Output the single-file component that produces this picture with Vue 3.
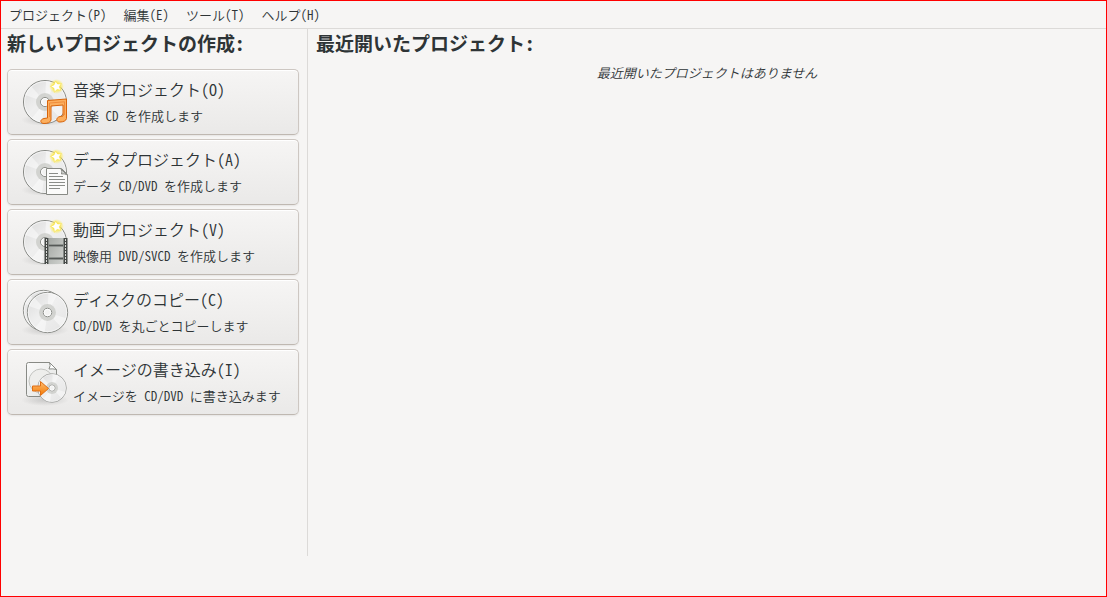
<script setup>
const menus = ['プロジェクト(P)', '編集(E)', 'ツール(T)', 'ヘルプ(H)']

const projects = [
  { kind: 'music', title: '音楽プロジェクト(O)', note: '音楽 CD を作成します' },
  { kind: 'data', title: 'データプロジェクト(A)', note: 'データ CD/DVD を作成します' },
  { kind: 'video', title: '動画プロジェクト(V)', note: '映像用 DVD/SVCD を作成します' },
  { kind: 'copy', title: 'ディスクのコピー(C)', note: 'CD/DVD を丸ごとコピーします' },
  { kind: 'image', title: 'イメージの書き込み(I)', note: 'イメージを CD/DVD に書き込みます' },
]
</script>

<template>
  <div class="window">
    <svg class="defs" aria-hidden="true">
      <defs>
        <linearGradient id="disc-fill" x1="0" y1="0" x2="1" y2="1">
          <stop offset="0" stop-color="#dadada" />
          <stop offset="0.45" stop-color="#efefef" />
          <stop offset="1" stop-color="#e4e4e4" />
        </linearGradient>
        <linearGradient id="page-fill" x1="0" y1="0" x2="1" y2="1">
          <stop offset="0" stop-color="#fafafa" />
          <stop offset="1" stop-color="#e2e3e1" />
        </linearGradient>
        <linearGradient id="film" x1="0" y1="0" x2="1" y2="1">
          <stop offset="0" stop-color="#a4a8a4" />
          <stop offset="1" stop-color="#d0d2cf" />
        </linearGradient>
        <linearGradient id="orange" x1="0" y1="0" x2="0" y2="1">
          <stop offset="0" stop-color="#fcbd74" />
          <stop offset="1" stop-color="#f57900" />
        </linearGradient>
        <radialGradient id="glow">
          <stop offset="0.4" stop-color="#fce94f" />
          <stop offset="1" stop-color="#fce94f" stop-opacity="0" />
        </radialGradient>
        <radialGradient id="shade">
          <stop offset="0" stop-color="#000" stop-opacity="0.15" />
          <stop offset="1" stop-color="#000" stop-opacity="0" />
        </radialGradient>
        <symbol id="disc" viewBox="0 0 48 48">
          <circle cx="24" cy="24" r="21.5" fill="url(#disc-fill)" stroke="#858783" />
          <circle cx="24" cy="24" r="20.5" fill="none" stroke="#fff" stroke-opacity="0.6" />
          <path d="M24 24 4 17A21 21 0 0 1 10 8ZM24 24 25 3A21 21 0 0 1 34 6ZM24 24 44 30A21 21 0 0 1 38 39ZM24 24 21 45A21 21 0 0 1 11 40Z" fill="#fff" fill-opacity="0.45" />
          <circle cx="24" cy="24" r="9" fill="#c8c9c6" fill-opacity="0.75" />
          <circle cx="24" cy="24" r="4.5" fill="#f3f3f2" stroke="#888a85" />
          <circle cx="24" cy="24" r="3.5" fill="none" stroke="#fff" />
        </symbol>
        <symbol id="spark" viewBox="0 0 16 16">
          <circle cx="8" cy="8" r="8" fill="url(#glow)" />
          <path d="m7 2 2.2 3.3 4-.4L11 8.3l1.7 3.7-4-.8-3 2.8-.4-4.1-3.600-2 3.700-1.700Z" fill="#fff" stroke="#f9e23c" stroke-width="0.7" />
        </symbol>
      </defs>
    </svg>

    <nav class="menubar">
      <button v-for="item in menus" :key="item" type="button">{{ item }}</button>
    </nav>

    <main class="content">
      <section class="create">
        <h2>新しいプロジェクトの作成:</h2>
        <div class="projects">
          <button v-for="p in projects" :key="p.kind" type="button" class="project">
            <svg class="icon" viewBox="0 0 48 48" aria-hidden="true">
              <ellipse cx="24" cy="42" rx="24" ry="6" fill="url(#shade)" />
              <template v-if="p.kind === 'copy'">
                <use href="#disc" x="0" y="0" width="45" height="45" />
                <use href="#disc" x="4" y="2" width="45" height="45" />
              </template>
              <template v-else-if="p.kind === 'image'">
                <path d="M7.500 4.500h21l7 7v25a2 2 0 0 1-2 2h-26a2 2 0 0 1-2-2v-30a2 2 0 0 1 2-2Z" fill="url(#page-fill)" stroke="#888a85" stroke-linejoin="round" />
                <circle cx="20" cy="23" r="12" fill="#eeeeec" stroke="#c3c4c1" />
                <path d="M28.500 4.500q1.500 3-.5 6.500 4-.5 7.500.5Z" fill="#fff" stroke="#888a85" stroke-linejoin="round" />
                <use href="#disc" x="15" y="14" width="32" height="32" />
                <path d="M11.500 28h8v-4.500l8 7-8 7v-4.500h-8Z" fill="url(#orange)" stroke="#e06f14" stroke-linejoin="round" />
              </template>
              <template v-else>
                <use href="#disc" width="48" height="48" />
                <use href="#spark" x="28" y="1" width="15" height="15" />
              </template>
              <template v-if="p.kind === 'music'">
                <path d="M26.500 22.500 45.500 21v19.500c-.5 2.500-3.500 3.500-6.500 3.500-4 0-4.500-4.500 0-5.500l3-.5V27l-12 1v14c-.5 2.500-3.500 3.500-7 3.500-4 0-4.500-4 0-5l3.500-.5Z" fill="#fcaf5e" stroke="#d9640a" stroke-linejoin="round" />
                <path d="M28.500 39V25l15-1.200V37" fill="none" stroke="#f08c3c" />
              </template>
              <template v-if="p.kind === 'data'">
                <path d="M25.500 20.500h15l6 6v20h-21Z" fill="#fbfbfa" stroke="#888a85" />
                <path d="M39.500 20.500c2 2 1 4 1 5.500 2-.5 5 0 6 1.500Z" fill="#d3d4d1" stroke="#888a85" />
                <path d="M28 25.500h9M28 28.500h14M28 31.500h16M28 34.500h16M28 37.500h16M28 40.500h11" stroke="#8b8d89" />
              </template>
              <template v-if="p.kind === 'video'">
                <path d="M24 20h22v26H24Z" fill="#c9ccc9" />
                <path d="M28 20h14v6H28ZM28 29h14v10H28ZM28 42h14v4H28Z" fill="url(#film)" />
                <path d="M28 27.500h14M28 40.500h14" stroke="#555957" stroke-width="2" />
                <path d="M25.500 20v26M44.500 20v26" stroke="#454946" stroke-width="4" />
                <path d="M25.500 21v25M44.500 21v25" stroke="#d9dad8" stroke-dasharray="2 1" />
              </template>
            </svg>
            <span class="labels">
              <span class="title">{{ p.title }}</span>
              <span class="note">{{ p.note }}</span>
            </span>
          </button>
        </div>
      </section>

      <section class="recent">
        <h2>最近開いたプロジェクト:</h2>
        <p>最近開いたプロジェクトはありません</p>
      </section>
    </main>
  </div>
</template>

<style>
body {
  background: #f6f5f4;
}
</style>

<style scoped>
.window {
  box-sizing: border-box;
  min-height: 100vh;
  padding-bottom: 40px;
  display: flex;
  flex-direction: column;
  border: 1px solid #f00;
  background: #f6f5f4;
  color: #2e3436;
  font-family: "Noto Sans CJK JP", sans-serif;
  font-feature-settings: "hwid";
  font-size: 13px;
  font-weight: 350;
}

.defs {
  position: absolute;
  width: 0;
  height: 0;
}

button {
  margin: 0;
  color: inherit;
  font: inherit;
  font-feature-settings: inherit;
}

.menubar {
  display: flex;
  gap: 1px;
  border-bottom: 1px solid #dcdad8;
}

.menubar button {
  padding: 0 8px;
  border: 0;
  background: none;
  line-height: 27px;
}

.content {
  flex: 1;
  display: flex;
}

.create {
  box-sizing: border-box;
  flex: 0 0 307px;
  padding: 0 8px 0 6px;
  border-right: 1px solid #dcdad8;
}

h2 {
  margin: 0;
  font-size: 19px;
  line-height: 27px;
}

.projects {
  display: grid;
  gap: 4px;
  margin-top: 13px;
}

.project {
  display: flex;
  align-items: center;
  gap: 4px;
  height: 66px;
  padding: 0 13px;
  border: 1px solid #cdc7c2;
  border-bottom-color: #bfb8b1;
  border-radius: 5px;
  background: linear-gradient(#f6f5f4, #eae9e8);
  box-shadow: inset 0 1px #fff, 0 1px 2px rgb(0 0 0 / 7%);
  text-align: left;
}

.icon {
  flex: none;
  width: 48px;
  height: 48px;
}

.labels {
  display: grid;
  gap: 1px;
  padding-top: 1px;
  line-height: 26px;
  white-space: nowrap;
}

.title {
  font-size: 16px;
}

.recent {
  flex: 1;
  padding: 0 8px;
}

.recent p {
  margin: 7px 0 0;
  font-style: italic;
  line-height: 20px;
  text-align: center;
}
</style>
